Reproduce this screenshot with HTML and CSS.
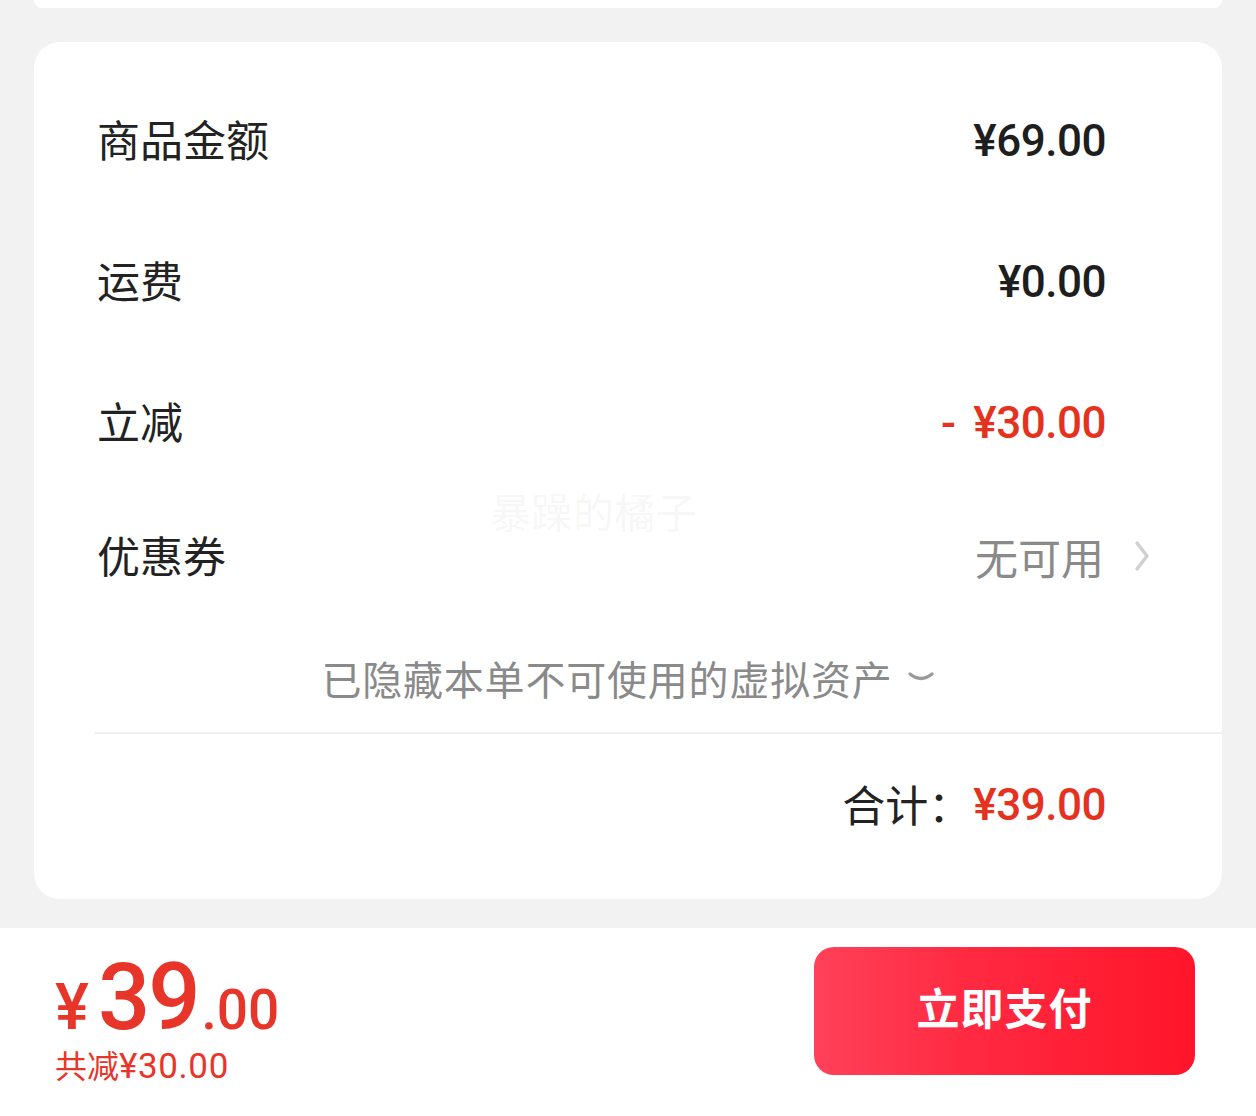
FILE: index.html
```html
<!DOCTYPE html>
<html lang="zh-CN">
<head>
<meta charset="utf-8">
<title>订单结算</title>
<link rel="stylesheet" href="styles.css">
</head>
<body>
<div class="page">
  <div class="top-card"></div>
  <section class="card">
    <div class="row">
      <span class="label">商品金额</span>
      <span class="value">¥69.00</span>
    </div>
    <div class="row">
      <span class="label">运费</span>
      <span class="value">¥0.00</span>
    </div>
    <div class="row">
      <span class="label">立减</span>
      <span class="value red"><span class="minus">-</span>¥30.00</span>
    </div>
    <div class="row coupon">
      <span class="label">优惠券</span>
      <span class="coupon-value">
        <span class="muted">无可用</span>
        <svg class="chev-right" width="16" height="32" viewBox="0 0 16 32"><path d="M3 3 L13 16 L3 29" fill="none" stroke="#cfcfcf" stroke-width="3.4" stroke-linecap="round" stroke-linejoin="round"/></svg>
      </span>
    </div>
    <div class="hidden-row">
      <span class="hidden-text">已隐藏本单不可使用的虚拟资产</span>
      <svg class="chev-down" width="28" height="14" viewBox="0 0 28 14"><path d="M3 4 Q14 13 25 4" fill="none" stroke="#9a9a9a" stroke-width="3.2" stroke-linecap="round"/></svg>
    </div>
    <div class="divider"></div>
    <div class="row total">
      <span class="total-label">合计：</span>
      <span class="value red">¥39.00</span>
    </div>
    <div class="watermark">暴躁的橘子</div>
  </section>
  <footer class="bar">
    <div class="price-block">
      <div class="price"><span class="yen">¥</span><span class="int">39</span><span class="dec">.00</span></div>
      <div class="saved">共减<span class="saved-num">¥30.00</span></div>
    </div>
    <button class="pay">立即支付</button>
  </footer>
</div>
</body>
</html>
```

FILE: styles.css
```css
* { box-sizing: border-box; }
html, body {
  margin: 0;
  padding: 0;
  background: #f2f2f2;
}
body {
  font-family: "Noto Sans CJK SC", "Noto Sans", sans-serif;
  color: #222;
}
.page {
  width: 1256px;
  height: 1116px;
  overflow: hidden;
  display: flex;
  flex-direction: column;
}
.top-card {
  height: 8px;
  margin: 0 34px;
  background: #fff;
  border-radius: 0 0 24px 24px;
}
.card {
  position: relative;
  margin: 34px 34px 0;
  height: 857px;
  background: #fff;
  border-radius: 26px;
  padding: 28px 116px 0 63px;
  display: flex;
  flex-direction: column;
}
.row {
  height: 141px;
  display: flex;
  align-items: center;
  justify-content: space-between;
}
.row.coupon { height: 126px; }
.label {
  font-size: 43px;
  color: #222;
  margin-bottom: 5px;
}
.value {
  font-family: Roboto, "Noto Sans", sans-serif;
  font-weight: 500;
  font-size: 44px;
  color: #1e1e1e;
  letter-spacing: -0.5px;
}
.value.red { color: #e5321f; }
.minus {
  margin-right: 18px;
}
.coupon-value {
  display: flex;
  align-items: center;
  margin-right: -44px;
}
.muted {
  font-size: 43px;
  color: #8a8a8a;
}
.chev-right {
  margin-left: 30px;
}
.hidden-row {
  margin: 0 -116px 0 -63px;
  height: 113px;
  padding-top: 29px;
  display: flex;
  justify-content: center;
  align-items: flex-start;
}
.hidden-text {
  font-size: 40px;
  line-height: 60px;
  color: #8a8a8a;
  letter-spacing: 0.8px;
}
.chev-down {
  margin-left: 14px;
  margin-top: 22px;
}
.divider {
  height: 2px;
  background: #f0f0f0;
  margin: 0 -116px 0 -2px;
}
.row.total {
  height: 142px;
  justify-content: flex-end;
}
.total-label {
  font-size: 43px;
  color: #222;
  margin-right: 2px;
  margin-bottom: 4px;
}
.watermark {
  position: absolute;
  left: 456px;
  top: 448px;
  font-size: 41px;
  line-height: 1;
  color: rgba(0, 0, 0, 0.055);
  text-shadow: 1px 1px 0 rgba(0, 0, 0, 0.025);
  letter-spacing: 0.5px;
  pointer-events: none;
}
.bar {
  margin-top: 29px;
  flex: 1;
  background: #fff;
  display: flex;
  justify-content: space-between;
  align-items: flex-start;
  padding: 0 61px 0 55px;
}
.price-block {
  padding-top: 22px;
  color: #e8352a;
}
.price {
  font-family: Roboto, "Noto Sans", sans-serif;
  font-weight: 500;
  line-height: 96px;
  height: 96px;
  white-space: nowrap;
}
.yen {
  font-size: 64px;
  margin-left: 0;
  margin-right: 9px;
}
.int {
  font-size: 92px;
  letter-spacing: -2px;
}
.dec {
  font-size: 55px;
  margin-left: 3px;
}
.saved {
  font-size: 32px;
  line-height: 36px;
  font-family: "Noto Sans CJK SC", sans-serif;
  white-space: nowrap;
}
.saved-num {
  font-family: Roboto, "Noto Sans", sans-serif;
  font-size: 35px;
  letter-spacing: 0.6px;
}
.pay {
  margin-top: 19px;
  width: 381px;
  height: 128px;
  border: 0;
  border-radius: 20px;
  background: linear-gradient(90deg, #ff4159 0%, #ff2a42 40%, #ff1529 100%);
  color: #fff;
  font-family: "Noto Sans CJK SC", sans-serif;
  font-weight: 700;
  font-size: 43px;
  letter-spacing: 1px;
  padding: 0 0 10px;
  cursor: pointer;
}
```
